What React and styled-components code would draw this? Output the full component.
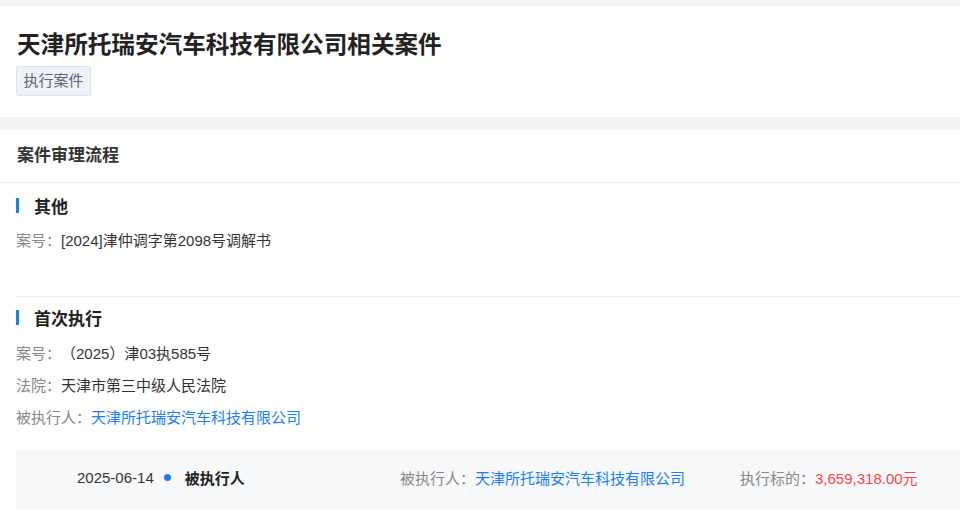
import React from "react";
import styled, { createGlobalStyle } from "styled-components";

const GlobalStyle = createGlobalStyle`
  html, body {
    margin: 0;
    padding: 0;
    background: #f4f4f4;
    font-family: "Liberation Sans", "Noto Sans CJK SC", sans-serif;
    color: #333;
    text-spacing-trim: space-all;
  }
`;

const Page = styled.div`
  padding-top: 6px;
  width: 960px;
  overflow: hidden;
`;

const Card = styled.div`
  background: #fff;
  margin-bottom: ${(props) => props.$gap || 0}px;
`;

const HeadCard = styled(Card)`
  padding: 23px 16px 21px;
`;

const Title = styled.h1`
  margin: 0 0 0 1px;
  font-size: 23.6px;
  line-height: 32px;
  font-weight: 700;
  color: #222;
`;

const Tag = styled.span`
  display: inline-block;
  margin-top: 5px;
  height: 28px;
  line-height: 28px;
  padding: 0 6.5px;
  font-size: 15px;
  color: #5f6572;
  background: #eef1f6;
  border: 1px solid #dde2ea;
  border-radius: 2px;
`;

const CardHeader = styled.div`
  height: 52px;
  line-height: 51px;
  padding: 0 17px;
  font-size: 17px;
  font-weight: 700;
  color: #333;
  border-bottom: 1px solid #eeeeee;
`;

const Section = styled.div`
  padding-top: ${(props) => (props.$divider ? 8 : 10)}px;
  padding-bottom: ${(props) => props.$bottom || 0}px;
  border-top: ${(props) => (props.$divider ? "1px solid #eeeeee" : "none")};
  margin-left: ${(props) => (props.$divider ? 16 : 0)}px;
  padding-left: ${(props) => (props.$divider ? 0 : 16)}px;
`;

const SectionTitle = styled.div`
  display: flex;
  align-items: center;
  gap: 15px;
  height: 24px;
  font-size: 17px;
  font-weight: 700;
  color: #222;
  margin-bottom: ${(props) => props.$after || 8}px;
  &::before {
    content: "";
    width: 3px;
    height: 15px;
    background: #1482f5;
  }
`;

const InfoLine = styled.div`
  font-size: 15px;
  line-height: 32px;
  color: #333;
  white-space: nowrap;
`;

const Label = styled.span`
  color: #888;
`;

const Link = styled.span`
  color: #1a7ef5;
`;

const Money = styled.span`
  color: #f5474a;
`;

const Timeline = styled.div`
  margin-top: 15px;
  background: #f7f8fa;
  padding: 16px 0 30px;
`;

const Row = styled.div`
  display: flex;
  align-items: center;
  height: 24px;
  font-size: 15px;
  white-space: nowrap;
`;

const RowLead = styled.div`
  width: 384px;
  display: flex;
  align-items: center;
  padding-left: 61px;
  box-sizing: border-box;
`;

const DateText = styled.span`
  color: #333;
`;

const Dot = styled.span`
  width: 7px;
  height: 7px;
  border-radius: 50%;
  background: #1a7ef5;
  margin: 0 14px 0 10px;
`;

const RowTitle = styled.span`
  font-weight: 700;
  color: #222;
`;

const RowCell = styled.div`
  width: ${(props) => props.$width}px;
`;

export default function App() {
  return (
    <>
      <GlobalStyle />
      <Page>
        <HeadCard $gap={13}>
          <Title>天津所托瑞安汽车科技有限公司相关案件</Title>
          <Tag>执行案件</Tag>
        </HeadCard>
        <Card>
          <CardHeader>案件审理流程</CardHeader>
          <Section $bottom={39}>
            <SectionTitle>其他</SectionTitle>
            <InfoLine>
              <Label>案号：</Label>[2024]津仲调字第2098号调解书
            </InfoLine>
          </Section>
          <Section $divider>
            <SectionTitle $after={9}>首次执行</SectionTitle>
            <InfoLine>
              <Label>案号：</Label>（2025）津03执585号
            </InfoLine>
            <InfoLine>
              <Label>法院：</Label>天津市第三中级人民法院
            </InfoLine>
            <InfoLine>
              <Label>被执行人：</Label>
              <Link>天津所托瑞安汽车科技有限公司</Link>
            </InfoLine>
            <Timeline>
              <Row>
                <RowLead>
                  <DateText>2025-06-14</DateText>
                  <Dot />
                  <RowTitle>被执行人</RowTitle>
                </RowLead>
                <RowCell $width={340}>
                  <Label>被执行人：</Label>
                  <Link>天津所托瑞安汽车科技有限公司</Link>
                </RowCell>
                <RowCell $width={220}>
                  <Label>执行标的：</Label>
                  <Money>3,659,318.00元</Money>
                </RowCell>
              </Row>
            </Timeline>
          </Section>
        </Card>
      </Page>
    </>
  );
}
